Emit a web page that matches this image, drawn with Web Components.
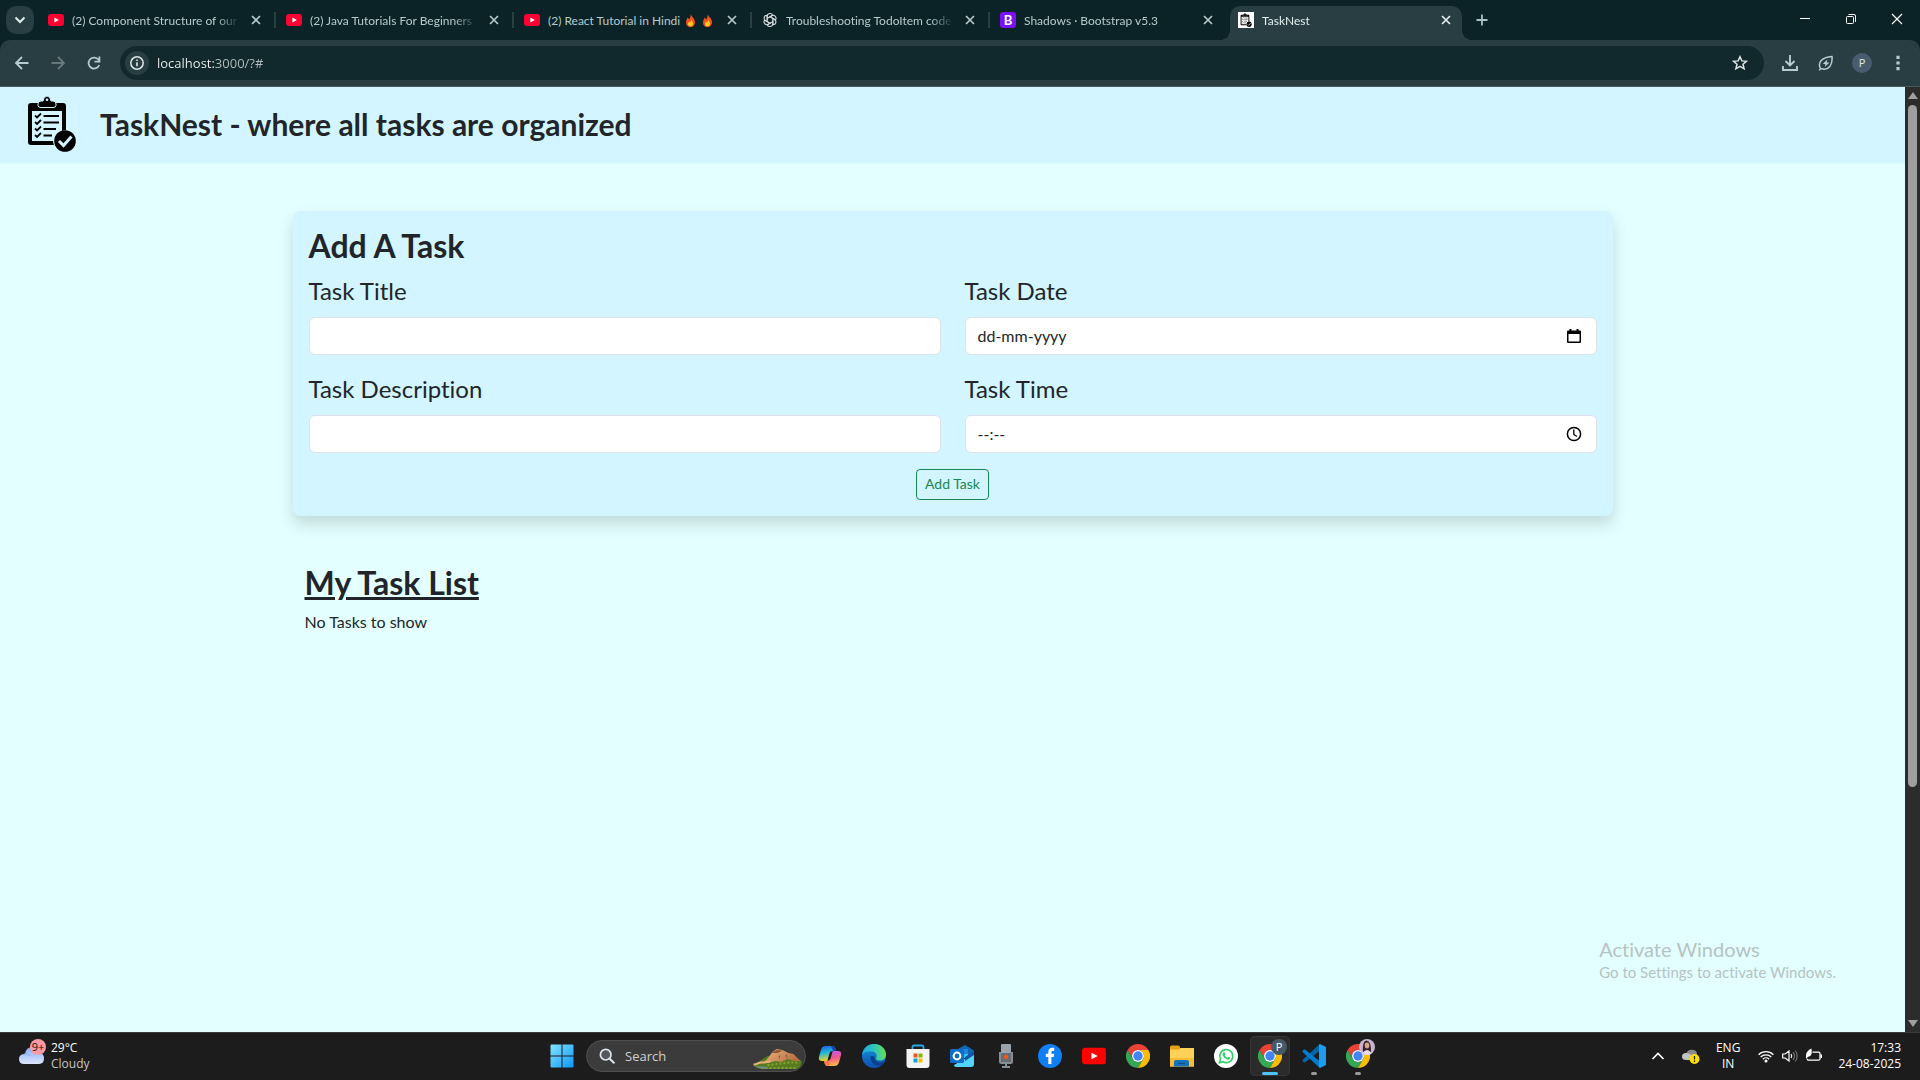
<!DOCTYPE html>
<html lang="en-IN">
<head>
<meta charset="utf-8">
<title>TaskNest</title>
<style>
  body { margin: 0; height: 100vh; overflow: hidden; font-family: Lato, "Open Sans", sans-serif; font-variant-ligatures: none; }
</style>
</head>
<body>
<desktop-screen></desktop-screen>
<script>
const CHROME = `<path fill="#ea4335" d="M24 12h20.8A24 24 0 0 0 3.2 12l10.4 18A12 12 0 0 1 24 12z"/><path fill="#34a853" d="M3.2 12A24 24 0 0 0 24 48l10.4-18a12 12 0 0 1-20.8 0z"/><path fill="#fbbc04" d="M24 48A24 24 0 0 0 44.8 12H24a12 12 0 0 1 10.4 18z"/><circle cx="24" cy="24" r="12" fill="#fff"/><circle cx="24" cy="24" r="9.4" fill="#4285f4"/>`;
const YT = c => `<rect width="16" height="12" y="2" rx="3" fill="${c}"/><path fill="#fff" d="M6.4 5.5v5L10.8 8z"/>`;
const FLAME = `<path fill="#f4511e" d="M8 0c1 3 5 5 5.500 9.500C13.700 13.500 11.300 16 8 16s-5.700-2.500-5.500-6C2.600 7.500 4 6 4.300 4.300 5.500 5 6 6 6.200 7 7.500 5 8.500 3 8 0z"/><path fill="#ffca28" d="M8.600 6.500c.4 2 2.600 3 2.500 5.500-.1 2-1.400 3.200-3.100 3.200S5 14 5 12.200c0-1.300.8-2 1-3 .8.3 1.200.8 1.300 1.500.9-1.200 1.500-2.500 1.300-4.200z"/>`;
const BOARD = `<path fill-rule="evenodd" d="M3 7h32a3 3 0 0 1 3 3v24a11 11 0 0 0-4 1V15H4v30h21a11 11 0 0 0 1 4H3a3 3 0 0 1-3-3V10a3 3 0 0 1 3-3z"/><path d="M10 9.500V8q0-3 3-3h2q.5-4.500 4-5 3.500.5 4 5h2q3 0 3 3v1.500q0 2-3 2H13q-3 0-3-2z" stroke="#d2f5ff" stroke-width="1"/><circle cx="19" cy="3.800" r="1.300" fill="#d2f5ff"/><path fill="none" stroke="#000" stroke-width="1.800" d="M15.500 20H31M15.500 26.500H31M15.500 33H28M15.500 39.500H24M7 19.500l2 2 4-4M7 26l2 2 4-4M7 32.500l2 2 4-4M7 39l2 2 4-4"/><circle cx="37" cy="45" r="10.800"/><path fill="none" stroke="#d2f5ff" stroke-width="3" d="M31 45l4.500 4.500 8-9"/>`;

const ICONS = {
  chevron: ['0 0 16 16', '<path fill="none" stroke="currentColor" stroke-width="2" d="M3.500 5.500 8 10l4.500-4.500"/>'],
  up: ['0 0 16 16', '<path fill="none" stroke="currentColor" stroke-width="1.600" d="M2.500 11 8 5.500l5.500 5.500"/>'],
  close: ['0 0 16 16', '<path stroke="currentColor" stroke-width="1.700" d="m4 4 8 8M12 4l-8 8"/>'],
  plus: ['0 0 16 16', '<path stroke="currentColor" stroke-width="1.800" d="M8 2.500v11M2.500 8h11"/>'],
  back: ['0 0 16 16', '<path fill="none" stroke="currentColor" stroke-width="1.800" d="M14.500 8H2.500M8 2 2 8l6 6"/>'],
  forward: ['0 0 16 16', '<path fill="none" stroke="currentColor" stroke-width="1.800" d="M1.500 8h12M8 2l6 6-6 6"/>'],
  reload: ['0 0 16 16', '<path fill="none" stroke="currentColor" stroke-width="1.800" d="M13.200 10A5.500 5.500 0 1 1 12 4.200L13.500 6"/><path fill="currentColor" d="M14.300 1.500v6H8.500V5.800h4V1.500z"/>'],
  info: ['0 0 16 16', '<circle cx="8" cy="8" r="6.200" fill="none" stroke="currentColor" stroke-width="1.500"/><path stroke="currentColor" stroke-width="1.600" d="M8 7.200v4M8 4.500v1.600"/>'],
  star: ['0 0 16 16', '<path fill="none" stroke="currentColor" stroke-width="1.500" d="m8 1.700 1.900 4.200 4.600.4-3.500 3 1.100 4.500L8 11.400l-4.100 2.400L5 9.300l-3.500-3 4.600-.4z"/>'],
  download: ['0 0 16 16', '<path fill="none" stroke="currentColor" stroke-width="1.900" d="M8 0v10M3.500 6 8 10.500 12.500 6M1 11v4h14v-4"/>'],
  leaf: ['0 0 16 16', '<path fill="none" stroke="currentColor" stroke-width="1.500" d="M2.500 13.500C-.5 8 3 2.500 14 1.500c.8 9-3.500 13.500-9 12.500l-2.500-.5-1.200 1.800"/><path fill="currentColor" d="M9.500 4.500 4.800 8.800l2.700.4-.8 2.800 4.600-4.200-2.600-.5z"/>'],
  kebab: ['0 0 16 16', '<path fill="currentColor" d="M6.400.8h3.200V4H6.400zM6.400 6.400h3.200v3.200H6.400zM6.400 12h3.200v3.200H6.400z"/>'],
  min: ['0 0 12 12', '<path stroke="currentColor" d="M1 5.500h10"/>'],
  restore: ['0 0 12 12', '<rect x="1.500" y="3.500" width="7" height="7" rx="1" fill="none" stroke="currentColor"/><path fill="none" stroke="currentColor" d="M3.500 1.500H9a1.500 1.500 0 0 1 1.500 1.500v6"/>'],
  quit: ['0 0 12 12', '<path stroke="currentColor" stroke-width="1.200" d="m1 1 10 10M11 1 1 11"/>'],
  flame: ['0 0 16 16', FLAME],
  favyt: ['0 0 16 16', YT('#ff0033')],
  youtube: ['0 0 16 16', `<g transform="translate(0 1)"><rect width="16" height="11" y="1.500" rx="2.200" fill="#f00"/><path fill="#fff" d="M6.300 4.800v4.400L10.500 7z"/></g>`],
  gpt: ['0 0 16 16', '<g fill="none" stroke="#d5dede" stroke-width="1.100"><path id="p" d="M5.200 9.600V4.300a2.900 2.900 0 0 1 5.500-1.200M6.800 5.400l4.300-2.500"/><use href="#p" transform="rotate(60 8 8)"/><use href="#p" transform="rotate(120 8 8)"/><use href="#p" transform="rotate(180 8 8)"/><use href="#p" transform="rotate(240 8 8)"/><use href="#p" transform="rotate(300 8 8)"/></g>'],
  favtask: ['0 0 16 16', '<path fill="#fff" d="M0 0h16v16H0z"/><g transform="translate(2.600 1) scale(.23 .25)">' + BOARD + '</g>'],
  board: ['0 0 48 56', BOARD],
  calendar: ['0 0 16 16', '<path fill-rule="evenodd" d="M3.500 1h2v1.500h5V1h2v1.500H14q1 0 1 1V14q0 1-1 1H2q-1 0-1-1V3.500q0-1 1-1h1.500zM2.500 6v7.500h11V6z"/>'],
  clock: ['0 0 16 16', '<circle cx="8" cy="8" r="6.600" fill="none" stroke="#000" stroke-width="1.500"/><path fill="none" stroke="#000" stroke-width="1.300" d="M7.800 3.500V8.500l3.200 2"/>'],
  windows: ['0 0 24 24', '<defs><linearGradient id="g" x2="1" y2="1"><stop stop-color="#84e3ff"/><stop offset="1" stop-color="#0c97fd"/></linearGradient></defs><path fill="url(#g)" d="M1.500 .5H11.500V11.500H.5V1.500q0-1 1-1zM12.500 .5h10q1 0 1 1v10h-11zM.5 12.500h11v11h-10q-1 0-1-1zM12.500 12.500h11v10q0 1-1 1h-10z"/>'],
  lens: ['0 0 16 16', '<circle cx="6.700" cy="6.700" r="5.300" fill="#55585c" stroke="#dfe5ea" stroke-width="1.700"/><path stroke="#dfe5ea" stroke-width="2" stroke-linecap="round" d="m10.800 10.800 4 4"/>'],
  hill: ['0 0 48 22', '<defs><linearGradient id="g" x2="1" y2=".4"><stop stop-color="#f0b77f"/><stop offset="1" stop-color="#b66f44"/></linearGradient></defs><path fill="#567c22" d="M0 17 14 8l28 2 6 3c.5 4-1.500 7-5 8H10Q2 21 0 17z"/><path fill="url(#g)" d="M13 12 19 4l4-3 6 1 6 3 5 1 7 7-6 0-7-2-6 3-6-1-8 2-4-1z"/><path fill="#8b5636" d="m18 5 5-3 6 .5-5 2.500zM25 9l2-3-1 5zM32 8l1-2 1 4z"/><path fill="none" stroke="#e8b27c" stroke-width="2" d="M0 16.500c5 0 4-2.500 9-2s5-1.500 8-1"/><path fill="none" stroke="#88a32f" stroke-width="2" stroke-dasharray="2 2" d="M14 17c10 0 20-4 32-2M8 20h34"/><path fill="#6e8f8b" d="M2 18q4 3 9 3l4-2z"/>'],
  copilot: ['0 0 24 24', '<defs><linearGradient id="a" x2=".2" y2="1"><stop stop-color="#1b5be0"/><stop offset=".5" stop-color="#24b8d8"/><stop offset="1" stop-color="#e8d02a"/></linearGradient><linearGradient id="b" x2=".2" y2="1"><stop stop-color="#b65cf5"/><stop offset=".55" stop-color="#f2568c"/><stop offset="1" stop-color="#ffb04d"/></linearGradient></defs><path fill="url(#a)" d="M7.500 2h7q2 0 2.700 2.200L18 7h-3.500q-2.300 0-3 2.300L9.300 17H4q-4 0-3-4.300l2-7Q4 2 7.500 2z"/><path fill="#1942b5" d="M13 2h2q1.700 0 2.400 2.200L18.200 7H15z"/><path fill="url(#b)" d="M16.500 22h-7q-2 0-2.700-2.200L6 17h3.500q2.300 0 3-2.300L14.700 7H20q4 0 3 4.300l-2 7q-1 3.700-4.500 3.700z"/><path fill="#ff7a45" d="M6 17h3.500q2.300 0 3-2.300L11 22H9.500q-2 0-2.700-2.200z"/>'],
  edge: ['0 0 24 24', '<defs><linearGradient id="a" y1=".4" x2="1" y2=".3"><stop stop-color="#1ba5e8"/><stop offset=".55" stop-color="#32c9b4"/><stop offset="1" stop-color="#6bdf4e"/></linearGradient><linearGradient id="b" x2="0" y2="1"><stop stop-color="#1a93dd"/><stop offset="1" stop-color="#0c4fb0"/></linearGradient></defs><circle cx="12" cy="12" r="12" fill="url(#b)"/><path fill="url(#a)" d="M0 11.500C.8 4.500 5.500 0 12 0c7 0 12 5 12 10.500 0 4-3 6-6 6-3.500 0-4.500-1.500-4-2.500 1.500-2 .5-6-4-6.500C5.500 7 1 8.500 0 11.500z"/><path fill="#0d3f8c" d="M8.500 12.500c-.5 5 3.500 10 10.500 9.300 1.500-.8 3-2.300 3.800-4.300-5 2.500-10.800.5-10.300-4.500-1.500-1.200-3.500-1.500-4 -.5z"/>'],
  store: ['0 0 24 24', '<path fill="none" stroke="#28a8ea" stroke-width="1.800" d="M6.500 6V3q0-1.500 1.500-1.500h8q1.500 0 1.500 1.500v3"/><path fill="#f3f3f3" d="M.5 5h23v16q0 3-3 3h-17q-3 0-3-3z"/><path fill="#f25022" d="M7.500 9.500h4v4h-4z"/><path fill="#7fba00" d="M12.500 9.500h4v4h-4z"/><path fill="#00a4ef" d="M7.500 14.500h4v4h-4z"/><path fill="#ffb900" d="M12.500 14.500h4v4h-4z"/>'],
  outlook: ['0 0 24 24', '<path fill="#1066b5" d="M6 6 15 1l9 5.500V12H6z"/><path fill="#37c2f1" d="M5 8h13v6H5z"/><path fill="#1b86d8" d="M6 5h12v5H6z"/><path fill="#52d5f9" d="M24 8v12q0 3-3 3H6q-2 0-2-2l14-8z"/><path fill="#1257a5" d="m24 7-9 6v4l9-6z"/><rect y="5" width="14" height="14" rx="1.500" fill="#0f6cc9"/><circle cx="7" cy="12" r="3.400" fill="none" stroke="#fff" stroke-width="2"/>'],
  mic: ['0 0 24 24', '<path fill="#9ba3ab" d="M8 0h8q1 0 1 1v8H7V1q0-1 1-1z"/><path fill="#666d75" d="M7 9h10v8q0 1-1 1H8q-1 0-1-1z"/><circle cx="12" cy="13" r="2.300" fill="#f0581c"/><path fill="none" stroke="#858d95" stroke-width="2" d="M6 8v9.500q0 1.500 1.500 1.500h9q1.500 0 1.500-1.500V8M12 19v4M8 23h8"/>'],
  facebook: ['0 0 24 24', '<circle cx="12" cy="12" r="12" fill="#0f7ff3"/><path fill="#fff" d="M10.300 20v-7H7.800V9.800h2.500V8.200c0-2.800 1.400-4.400 4-4.400h1.900V7h-1.500c-1 0-1.300.5-1.300 1.400v1.400h2.800l-.5 3.200h-2.300v7z"/>'],
  chrome: ['0 0 48 48', CHROME],
  folder: ['0 0 24 24', '<path fill="#e6a012" d="M0 3q0-1.500 1.500-1.500h7q1 0 1.500 1.500v4H0z"/><path fill="#ffd257" d="M0 5.500h8.500l2-1.500H24v18.500H0z"/><path fill="#f7bd35" d="M0 14h24v8.500H0z"/><path fill="#1472bd" d="M4 22.500V18q0-2 2-2h11q2 0 2 2v4.500z"/><path stroke="#0c558f" stroke-width="1.400" d="M8 19.500h7"/>'],
  whatsapp: ['0 0 24 24', '<circle cx="12" cy="12" r="12" fill="#fff"/><path fill="none" stroke="#2fce66" stroke-width="1.600" d="m5.500 18.700 1-3.600A6.500 6.500 0 1 1 9 17.700z"/><path fill="#2fce66" d="M9.500 8.500c.6-.6 1.200-.4 1.500.4l.5 1.200-.8 1.100c.7 1.200 1.500 2 2.700 2.500l.9-1 1.700.8c.6.500-.2 2.200-1.600 2.200-3 0-6.200-3.700-5.800-5.600.1-.7.400-1.200.9-1.600z"/>'],
  vscode: ['0 0 24 24', '<path fill="#0065a9" d="m1 15.500 16-14.800V7.500L3 18.500H2L.3 17z"/><path fill="#007acc" d="M1 8.500.3 7 2 5.500h1l14 11v6.800z"/><path fill="#1f9cf0" d="M17 .5 18 0l6 3v18l-6 3-1-.7z"/>'],
  weather: ['0 0 32 26', '<defs><linearGradient id="g" x2="0" y2="1"><stop stop-color="#7fabf2"/><stop offset="1" stop-color="#dbe7fd"/></linearGradient></defs><path fill="url(#g)" d="M5 25q-5 0-5-5t6-5q1-7 7.500-7 6 0 7.500 6 4 .5 4 5.500t-5 5.500z"/><path fill="none" stroke="#86aef0" d="M5 15q4-1 6 2"/>'],
  onedrive: ['0 0 18 16', '<path fill="#8b8b8b" d="M4 6q2-5 7-4 4 0 4 5l-6 3z"/><path fill="#c3c3c3" d="M4 12q-4 0-4-3.500T4 5q5 0 9 6v1z"/><circle cx="12.500" cy="11" r="5" fill="#ffe100"/><path stroke="#222" stroke-width="1.300" d="M12.500 8v3.500M12.500 12.500V14"/>'],
  wifi: ['0 0 16 16', '<g fill="none" stroke="#fff" stroke-width="1.300"><path d="M.6 6.700a10.500 10.500 0 0 1 14.800 0M2.700 9a7.500 7.500 0 0 1 10.600 0M4.900 11.200a4.400 4.400 0 0 1 6.200 0"/></g><circle cx="8" cy="13" r="1.500" fill="#fff"/>'],
  speaker: ['0 0 16 16', '<path fill="none" stroke="#fff" stroke-width="1.200" d="M.7 6v4h2.500L7 13V3L3.200 6zM9 6q1.500 2 0 4"/><path fill="none" stroke="#777" stroke-width="1.100" d="M11 4.200q3 3.800 0 7.600M13.200 2.500q4 5.500 0 11"/>'],
  battery: ['0 0 16 16', '<path fill="none" stroke="#fff" stroke-width="1.300" d="M6.500 4.200h6q1.500 0 1.500 1.500v5q0 1.500-1.500 1.500H2.800q-1.500 0-1.500-1.500"/><path fill="#fff" d="M14.500 6.500H16V10h-1.500zM0 7q.3-4 5.500-6.500.5 4 0 5.500-1 3-3.500 2.800L0 11z"/>'],
  portrait: ['0 0 16 16', '<circle cx="8" cy="8" r="8" fill="#c9b4cf"/><path fill="#33222b" d="M4 14Q3 2 7.500 1.500 12.500 2 12 14z"/><ellipse cx="8" cy="6.500" rx="2.300" ry="3" fill="#d9a58c"/><path fill="#e8dbe6" d="M3.500 14.500q1-3 4.500-3.500 3.500.5 4.500 3.500Q8 17.500 3.500 14.500z"/>']
};

/* Defines an element whose shadow root is cloned from one template. */
function define(name, html, setup) {
  const tpl = document.createElement('template');
  tpl.innerHTML = '<style>*{box-sizing:border-box}button,input{font:inherit;color:inherit;margin:0;border:0;padding:0;background:none}button{display:grid;place-items:center;flex:none}</style>' + html;
  customElements.define(name, class extends HTMLElement {
    constructor() {
      super();
      this.attachShadow({ mode: 'open' }).append(tpl.content.cloneNode(true));
    }
    connectedCallback() { if (setup) setup(this, this.shadowRoot); }
  });
}

define('ui-icon', `<style>:host{display:block;flex:none;width:var(--size,16px);height:var(--size,16px)}svg{display:block;width:100%;height:100%}</style><svg aria-hidden="true"></svg>`,
  (el, r) => {
    const [box, body] = ICONS[el.getAttribute('name')];
    const s = r.querySelector('svg');
    s.setAttribute('viewBox', box);
    s.innerHTML = body;
  });

define('browser-tab', `<style>
  :host{display:flex;flex:0 1 238px;min-width:0;height:34px;align-items:stretch;color:#b6cbcc;position:relative}
  .tab{flex:1;min-width:0;display:flex;align-items:center;gap:8px;padding:0 8px;height:28px;margin-right:6px}
  .title{flex:1;min-width:0;display:flex;align-items:center;gap:4px;white-space:nowrap;overflow:hidden;font-size:12px;line-height:16px;padding-top:1px;
    -webkit-mask-image:linear-gradient(90deg,#000 calc(100% - 24px),transparent)}
  :host([fits]) .title{-webkit-mask-image:none}
  button{width:16px;height:16px}
  .line{position:absolute;right:2px;top:6px;width:2px;height:16px;background:#28403f}
  :host([active]){color:#e3eeee}
  :host([active]) .tab{height:34px;padding-bottom:6px;background:#283e42;border-radius:10px 10px 0 0}
  :host([active]) .line,:host([last]) .line{display:none}
  :host([active])::before,:host([active])::after{content:"";position:absolute;bottom:0;width:10px;height:10px}
  :host([active])::before{left:-10px;background:radial-gradient(circle at 0 0,transparent 10px,#283e42 10px)}
  :host([active])::after{right:-4px;background:radial-gradient(circle at 100% 0,transparent 10px,#283e42 10px)}
  </style><div class="tab"><slot name="icon"></slot><span class="title"><slot></slot></span><button aria-label="Close tab"><ui-icon name="close"></ui-icon></button></div><span class="line"></span>`);

define('tab-strip', `<style>
  :host{display:flex;height:40px;padding:6px 0 0 6px;background:#0b2327;--size:16px}
  .menu{width:28px;height:28px;border-radius:10px;background:#283e42;color:#e0eded;margin-right:6px}
  .new{width:28px;height:28px;color:#a9c3c5}
  .win{margin-left:auto;display:flex;color:#fff;--size:12px}
  .win button{width:46px;height:28px;padding-bottom:2px}
  ui-icon.flame{--size:13px}
  .boot{width:16px;height:16px;border-radius:3px;background:#7a12f5;color:#fff;font-size:13px;line-height:16px;text-align:center}
  </style>
  <button class="menu" aria-label="Search tabs"><ui-icon name="chevron"></ui-icon></button>
  <browser-tab><ui-icon slot="icon" name="favyt"></ui-icon>(2) Component Structure of our app</browser-tab>
  <browser-tab><ui-icon slot="icon" name="favyt"></ui-icon>(2) Java Tutorials For Beginners</browser-tab>
  <browser-tab fits><ui-icon slot="icon" name="favyt"></ui-icon>(2) React Tutorial in Hindi <ui-icon class="flame" name="flame"></ui-icon><ui-icon class="flame" name="flame"></ui-icon></browser-tab>
  <browser-tab><ui-icon slot="icon" name="gpt"></ui-icon>Troubleshooting TodoItem code</browser-tab>
  <browser-tab last><b class="boot" slot="icon">B</b>Shadows · Bootstrap v5.3</browser-tab>
  <browser-tab active><ui-icon slot="icon" name="favtask"></ui-icon>TaskNest</browser-tab>
  <button class="new" aria-label="New tab"><ui-icon name="plus"></ui-icon></button>
  <div class="win"><button aria-label="Minimise"><ui-icon name="min"></ui-icon></button><button aria-label="Restore"><ui-icon name="restore"></ui-icon></button><button aria-label="Close"><ui-icon name="quit"></ui-icon></button></div>`);

define('tool-bar', `<style>
  :host{display:block;background:#0b2327}
  .bar{display:flex;align-items:center;gap:8px;height:47px;padding:0 8px;background:#283e42;border-radius:10px 10px 0 0;border-bottom:1px solid #45585b;color:#b4cdd0;--size:16px}
  button{width:28px;height:28px}
  .dim{color:#66797c}
  .omni{flex:1;display:flex;align-items:center;gap:8px;height:34px;margin:0 4px;padding:0 10px 0 5px;border-radius:17px;background:#11292d;color:#dfe6e6}
  .omni .info{width:24px;height:24px;border-radius:50%;background:#283e42}
  input{flex:1;min-width:0;outline:0;font:13px "Open Sans",sans-serif;background:linear-gradient(90deg,#f0f4f4 58px,#b5bfc0 58px);-webkit-background-clip:text;background-clip:text;color:transparent}
  .who i{display:grid;place-items:center;width:20px;height:20px;border-radius:50%;background:#475d6e;color:#dfe8ee;font:11px/20px "Open Sans",sans-serif}
  .omni .star{width:28px}
  </style><div class="bar">
  <button aria-label="Back"><ui-icon name="back"></ui-icon></button>
  <button class="dim" aria-label="Forward"><ui-icon name="forward"></ui-icon></button>
  <button aria-label="Reload"><ui-icon name="reload"></ui-icon></button>
  <div class="omni"><button class="info" aria-label="Site information"><ui-icon name="info"></ui-icon></button><input type="text" aria-label="Address" value="localhost:3000/?#"><button class="star" aria-label="Bookmark"><ui-icon name="star"></ui-icon></button></div>
  <button aria-label="Downloads"><ui-icon name="download"></ui-icon></button>
  <button aria-label="Energy saver"><ui-icon name="leaf"></ui-icon></button>
  <button class="who" aria-label="Profile"><i>P</i></button>
  <button aria-label="Menu"><ui-icon name="kebab"></ui-icon></button></div>`);

define('scroll-rail', `<style>
  :host{display:flex;flex-direction:column;align-items:center;flex:none;width:15px;padding:5px 0;background:#2c2c2c}
  i{border:5px solid transparent}
  .up{border-top:0;border-bottom:7px solid #9f9f9f}
  .down{border-bottom:0;border-top:7px solid #9f9f9f}
  .track{flex:1;width:9px;padding:6px 0}
  .thumb{height:75%;border-radius:5px;background:#9f9f9f}
  </style><i class="up"></i><div class="track"><div class="thumb"></div></div><i class="down"></i>`);

define('site-header', `<style>
  :host{display:flex;align-items:center;gap:24px;height:76px;padding:0 28px 2px;box-sizing:border-box;background:#d2f5ff}
  ui-icon{width:48px;height:56px}
  h1{margin:0;font-size:30px;line-height:40px;font-weight:700}
  </style><ui-icon name="board"></ui-icon><h1><slot></slot></h1>`);

define('task-field', `<style>
  :host{display:block}
  label{display:block;margin-bottom:8px;font-size:24px;line-height:36px}
  .box{display:flex;align-items:center;height:38px;padding:0 12px;border:1px solid #dee2e6;border-radius:6px;background:#fff}
  input{flex:1;min-width:0;height:36px;padding-bottom:2px;outline:0;font-size:16px}
  input::placeholder{color:#212529;opacity:1}
  button{width:20px;height:20px}
  button[hidden]{display:none}
  </style><label for="f"><slot></slot></label><div class="box"><input id="f" type="text"><button type="button" aria-label="Open picker" hidden></button></div>`,
  (el, r) => {
    r.querySelector('input').placeholder = el.getAttribute('hint') || '';
    const icon = el.getAttribute('picker');
    if (icon) {
      const b = r.querySelector('button');
      b.hidden = false;
      b.innerHTML = `<ui-icon name="${icon}"></ui-icon>`;
    }
  });

define('task-form', `<style>
  :host{display:block;padding:16px;border-radius:8px;background:#d2f5ff;box-shadow:0 8px 16px rgba(0,0,0,.15)}
  h2{margin:0 0 8px;font-size:32px;line-height:38px}
  .grid{display:grid;grid-template-columns:1fr 1fr;gap:16px 24px}
  .add{margin:16px auto 0;height:31px;padding:0 8px 2px;border:1px solid #198754;border-radius:4px;color:#198754;font-size:14px;line-height:21px}
  </style><h2>Add A Task</h2><div class="grid">
  <task-field>Task Title</task-field><task-field hint="dd-mm-yyyy" picker="calendar">Task Date</task-field>
  <task-field>Task Description</task-field><task-field hint="--:--" picker="clock">Task Time</task-field></div>
  <button class="add">Add Task</button>`);

define('task-list', `<style>
  :host{display:block;padding:0 12px}
  h2{margin:0 0 8px;font-size:32px;line-height:38px;text-decoration:underline;text-decoration-thickness:3px}
  p{margin:0;font-size:16px;line-height:24px}
  </style><h2>My Task List</h2><p><slot></slot></p>`);

define('task-page', `<style>
  :host{display:block;flex:1;min-width:0;background:#e3ffff;color:#212529}
  main{display:grid;gap:48px;max-width:1320px;margin:48px auto 0}
  </style><site-header>TaskNest - where all tasks are organized</site-header>
  <main><task-form></task-form><task-list>No Tasks to show</task-list></main>`);

define('app-button', `<style>
  :host{display:block;position:relative;--size:24px}
  button{width:40px;height:40px;border-radius:5px}
  :host([active]) button{background:#2b2b2b;box-shadow:inset 0 0 0 1px #363636}
  .mark{display:none;position:absolute;left:50%;bottom:1px;height:3px;width:6px;border-radius:2px;transform:translateX(-50%);background:#9a9a9a}
  :host([open]) .mark,:host([active]) .mark{display:block}
  :host([active]) .mark{width:16px;background:#4cc2ff}
  ::slotted(*){position:absolute;top:3px;right:3px;width:16px;height:16px;border-radius:50%}
  </style><button></button><slot></slot><span class="mark"></span>`,
  (el, r) => {
    const b = r.querySelector('button');
    b.setAttribute('aria-label', el.getAttribute('name'));
    b.innerHTML = `<ui-icon name="${el.getAttribute('name')}"></ui-icon>`;
  });

define('task-bar', `<style>
  :host{display:grid;grid-template-columns:1fr auto 1fr;align-items:center;height:48px;padding:0 19px;background:#1c1c1c;box-shadow:inset 0 1px #3b3b3b;color:#fff;font:12px/16px "Open Sans",sans-serif}
  .weather{display:flex;align-items:center}
  .pic{position:relative;width:32px;height:26px;margin-bottom:8px}
  .pic ui-icon{width:32px;height:26px}
  .pic b{position:absolute;left:11px;top:0;width:16px;height:16px;border-radius:50%;background:#ff99a4;color:#111;font:11px/16px "Open Sans",sans-serif;text-align:center}
  .weather span span{display:block;color:#c4c4c4}
  .apps{display:flex;gap:4px}
  .search{display:flex;align-items:center;gap:10px;width:220px;height:32px;margin:4px 0;padding:0 3px 0 12px;border:1px solid #4f4f4f;border-radius:16px;background:#3b3b3b}
  .search input{flex:1;min-width:0;outline:0;font-size:13px}
  .search input::placeholder{color:#cfcfcf;opacity:1}
  .search .hill{width:49px;height:22px;margin-top:6px}
  .p{display:grid;place-items:center;background:#455a64;color:#fff;font-size:11px}
  .tray{display:flex;justify-content:flex-end;align-items:center;gap:16px;--size:16px}
  .net{display:flex;gap:8px;margin-left:2px}
  .mid{text-align:center}.end{text-align:right}
  .cloud{width:18px}
  </style>
  <div class="weather"><div class="pic"><ui-icon name="weather"></ui-icon><b>9+</b></div><span>29°C<span>Cloudy</span></span></div>
  <div class="apps"><app-button name="windows"></app-button>
  <div class="search"><ui-icon name="lens"></ui-icon><input type="text" aria-label="Search" placeholder="Search"><ui-icon class="hill" name="hill"></ui-icon></div>
  <app-button name="copilot"></app-button><app-button name="edge"></app-button><app-button name="store"></app-button><app-button name="outlook"></app-button><app-button name="mic"></app-button><app-button name="facebook"></app-button><app-button name="youtube"></app-button><app-button name="chrome"></app-button><app-button name="folder"></app-button><app-button name="whatsapp"></app-button><app-button name="chrome" active><span class="p">P</span></app-button><app-button name="vscode" open></app-button><app-button name="chrome" open><ui-icon name="portrait"></ui-icon></app-button></div>
  <div class="tray"><ui-icon name="up"></ui-icon><ui-icon class="cloud" name="onedrive"></ui-icon><div class="mid">ENG<br>IN</div><div class="net"><ui-icon name="wifi"></ui-icon><ui-icon name="speaker"></ui-icon><ui-icon name="battery"></ui-icon></div><div class="end">17:33<br>24-08-2025</div></div>`);

define('desktop-screen', `<style>
  :host{display:flex;flex-direction:column;height:100vh;position:relative}
  .view{flex:1;min-height:0;display:flex}
  .mark{position:absolute;right:84px;bottom:98px;color:#b5c3c3;pointer-events:none;font-size:15px;line-height:20px}
  .mark strong{display:block;font-weight:400;font-size:20px;line-height:25px}
  </style><tab-strip></tab-strip><tool-bar></tool-bar><div class="view"><task-page></task-page><scroll-rail></scroll-rail></div><task-bar></task-bar>
  <div class="mark"><strong>Activate Windows</strong>Go to Settings to activate Windows.</div>`);
</script>
</body>
</html>
